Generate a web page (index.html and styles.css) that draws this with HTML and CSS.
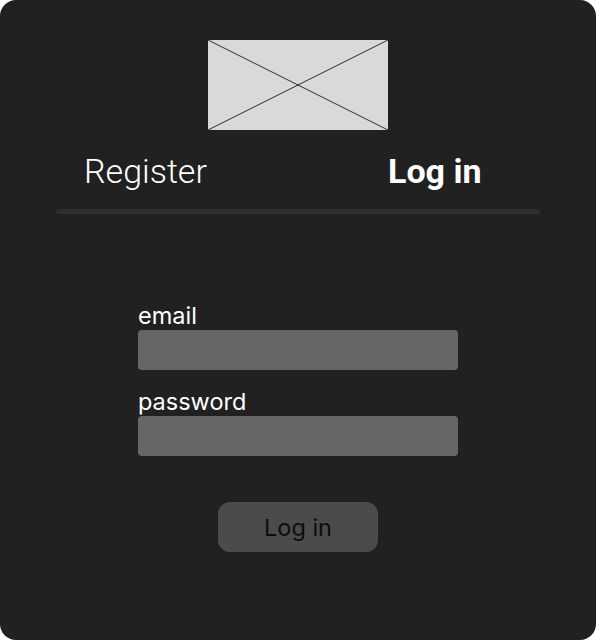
FILE: index.html
```html
<!DOCTYPE html>
<html>
<head>
<meta charset="utf-8">
<link rel="stylesheet" href="styles.css">
</head>
<body>
<div class="card">
  <div class="logo">
    <svg width="180" height="90" viewBox="0 0 180 90">
      <rect x="0" y="0" width="180" height="90" fill="#d9d9d9"/>
      <line x1="0" y1="0" x2="180" y2="90" stroke="#000" stroke-width="0.8"/>
      <line x1="180" y1="0" x2="0" y2="90" stroke="#000" stroke-width="0.8"/>
    </svg>
  </div>
  <div class="tabs">
    <div class="tab">Register</div>
    <div class="tab active">Log in</div>
  </div>
  <div class="divider"></div>
  <form class="form">
    <label class="label">email</label>
    <div class="input"></div>
    <label class="label second">password</label>
    <div class="input"></div>
    <div class="btn-row"><button type="button" class="btn">Log in</button></div>
  </form>
</div>
</body>
</html>
```
FILE: styles.css
```css
html, body {
  margin: 0;
  padding: 0;
  background: #ffffff;
}
.card {
  width: 596px;
  height: 640px;
  background: #212121;
  border-radius: 16px;
  box-sizing: border-box;
  padding-top: 40px;
  display: flex;
  flex-direction: column;
}
.logo {
  display: flex;
  justify-content: center;
  height: 90px;
}
.logo svg { display: block; }
.tabs {
  display: flex;
  margin-top: 21px;
  padding-left: 84px;
  font-family: Roboto, "Liberation Sans", sans-serif;
  font-size: 34px;
  font-weight: 300;
  line-height: 40px;
  color: #ffffff;
}
.tab { width: 304px; }
.tab.active { font-weight: 700; width: auto; }
.divider {
  margin: 18px 56px 0 56px;
  height: 5px;
  border-radius: 3px;
  background: #2e2e2e;
}
.form {
  margin: 0;
  padding: 92px 0 0 138px;
  display: flex;
  flex-direction: column;
  width: 320px;
  font-family: Inter, "Noto Sans", sans-serif;
}
.label {
  font-size: 23.5px;
  line-height: 20px;
  padding-bottom: 4px;
  color: #ffffff;
}
.label.second { margin-top: 22px; }
.input {
  height: 40px;
  background: #666666;
  border-radius: 4px;
}
.btn-row {
  display: flex;
  justify-content: center;
  margin-top: 46px;
}
.btn {
  width: 160px;
  height: 50px;
  border: none;
  border-radius: 12px;
  background: #4b4b4b;
  color: #0d0d0d;
  font-family: Inter, "Noto Sans", sans-serif;
  font-size: 23.5px;
  padding: 0;
}
```
